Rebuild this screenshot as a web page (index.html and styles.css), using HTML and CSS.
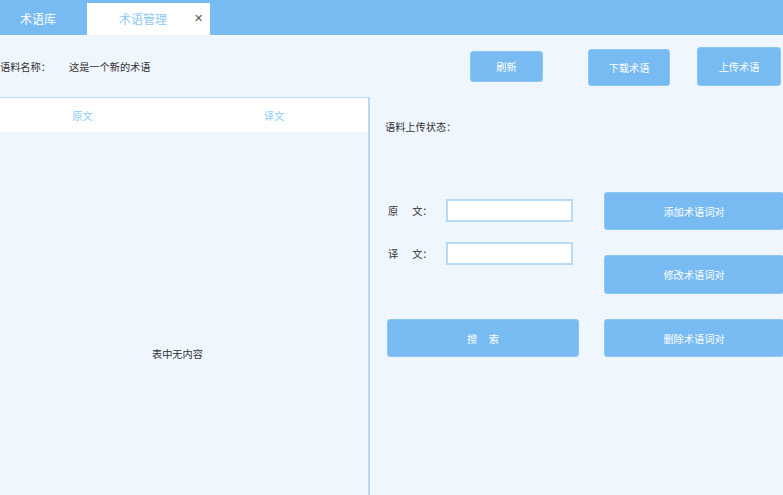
FILE: index.html
```html
<!DOCTYPE html>
<html lang="zh-CN">
<head>
<meta charset="utf-8">
<title>术语管理</title>
<link rel="stylesheet" href="styles.css">
</head>
<body>
<div class="app">
  <div class="tabs">
    <div class="tab">术语库</div>
    <div class="tab active"><span class="tab-title">术语管理</span><span class="tab-close">✕</span></div>
  </div>
  <div class="toolbar">
    <span class="name-label">语料名称：</span>
    <span class="name-value">这是一个新的术语</span>
    <button class="btn btn-refresh">刷新</button>
    <button class="btn btn-download">下载术语</button>
    <button class="btn btn-upload">上传术语</button>
  </div>
  <div class="main">
    <div class="table">
      <div class="thead">
        <span class="th th-src">原文</span>
        <span class="th th-tgt">译文</span>
      </div>
      <div class="tbody">
        <span class="empty">表中无内容</span>
      </div>
    </div>
    <div class="panel">
      <div class="status">语料上传状态：</div>
      <div class="form">
        <div class="form-left">
          <div class="field">
            <span class="label"><span>原</span><span class="label-b">文：</span></span>
            <input class="input" type="text">
          </div>
          <div class="field field-2">
            <span class="label"><span>译</span><span class="label-b">文：</span></span>
            <input class="input" type="text">
          </div>
          <button class="btn btn-search">搜&nbsp;&nbsp;&nbsp;&nbsp;&nbsp;索</button>
        </div>
        <div class="form-right">
          <button class="btn btn-wide">添加术语词对</button>
          <button class="btn btn-wide btn-tall">修改术语词对</button>
          <button class="btn btn-wide">删除术语词对</button>
        </div>
      </div>
    </div>
  </div>
</div>
</body>
</html>
```
FILE: styles.css
```css
* { box-sizing: border-box; }
html, body { margin: 0; padding: 0; }
body {
  width: 783px;
  height: 495px;
  overflow: hidden;
  background: #eff6fe;
  font-family: "Noto Sans CJK SC", "Noto Sans", sans-serif;
  font-size: 10.2px;
  color: #333;
}
.app { display: flex; flex-direction: column; height: 495px; }

.tabs {
  height: 35px;
  background: #78bbf2;
  display: flex;
  align-items: flex-end;
  flex-shrink: 0;
}
.tab {
  width: 87px;
  height: 32px;
  padding-left: 20px;
  line-height: 32px;
  font-size: 12px;
  color: #fff;
}
.tab.active {
  width: 123px;
  background: #fff;
  padding-left: 32px;
  color: #8cc9f5;
  display: flex;
  align-items: center;
}
.tab-title { width: 75px; }
.tab-close { color: #555; font-size: 11px; font-family: "DejaVu Sans", sans-serif; }

.toolbar {
  height: 62px;
  display: flex;
  align-items: center;
  flex-shrink: 0;
}
.name-label { width: 69px; }
.name-value { flex: 1; }

.btn {
  border: 1px solid #8ec6f3;
  background: #78bbf2;
  color: #fff;
  font-family: inherit;
  font-size: 10.2px;
  border-radius: 3px;
  padding: 0;
  cursor: pointer;
}
.btn-refresh { width: 73px; height: 31px; margin-right: 45px; }
.btn-download { width: 82px; height: 37px; margin-top: 2px; margin-right: 27px; }
.btn-upload { width: 84px; height: 39px; margin-right: 2px; }

.main { flex: 1; display: flex; min-height: 0; }
.table {
  width: 370px;
  border-top: 1px solid #b8dcf8;
  border-right: 2px solid #b5daf8;
  display: flex;
  flex-direction: column;
  flex-shrink: 0;
}
.thead {
  height: 34px;
  background: #fff;
  display: flex;
  align-items: center;
  color: #8ccbf5;
}
.th { text-align: center; }
.th-src { width: 165px; }
.th-tgt { width: 203px; padding-left: 15px; }
.tbody { flex: 1; padding-top: 212px; padding-left: 152px; line-height: 20px; }

.panel { flex: 1; padding-left: 15px; }
.status { margin-top: 23px; line-height: 14px; }
.form { display: flex; margin-top: 58px; }
.form-left { width: 194px; padding-top: 7px; display: flex; flex-direction: column; }
.field { display: flex; align-items: center; height: 23px; }
.field-2 { margin-top: 20px; }
.label { width: 61px; padding-left: 3px; display: flex; }
.label-b { margin-left: 14px; }
.input {
  width: 127px;
  height: 23px;
  border: 2px solid #b6dbf8;
  background: #fff;
  padding: 0 4px;
  outline: none;
}
.btn-search { width: 192px; height: 38px; margin-top: 54px; margin-left: 2px; }
.form-right { margin-left: 25px; display: flex; flex-direction: column; gap: 25px; flex-shrink: 0; }
.btn-wide { width: 180px; height: 38px; }
.btn-tall { height: 39px; }
```
